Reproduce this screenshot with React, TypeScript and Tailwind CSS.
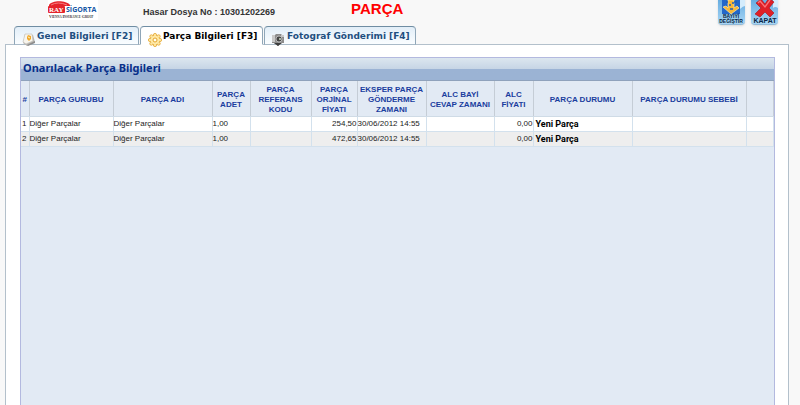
import type { ReactNode } from 'react';

type Column = { label: string[]; width: string };

const columns: Column[] = [
  { label: ['#'], width: 'w-[8px]' },
  { label: ['PARÇA GURUBU'], width: 'w-[84px]' },
  { label: ['PARÇA ADI'], width: 'w-[99px]' },
  { label: ['PARÇA', 'ADET'], width: 'w-[38px]' },
  { label: ['PARÇA', 'REFERANS', 'KODU'], width: 'w-[61px]' },
  { label: ['PARÇA', 'ORJİNAL', 'FİYATI'], width: 'w-[46px]' },
  { label: ['EKSPER PARÇA', 'GÖNDERME', 'ZAMANI'], width: 'w-[69px]' },
  { label: ['ALC BAYİ', 'CEVAP ZAMANI'], width: 'w-[68px]' },
  { label: ['ALC', 'FİYATI'], width: 'w-[39px]' },
  { label: ['PARÇA DURUMU'], width: 'w-[99px]' },
  { label: ['PARÇA DURUMU SEBEBİ'], width: 'w-[114px]' },
  { label: [], width: '' },
];

const rows = [
  ['1', 'Diğer Parçalar', 'Diğer Parçalar', '1,00', '', '254,50', '30/06/2012 14:55', '', '0,00', 'Yeni Parça', '', ''],
  ['2', 'Diğer Parçalar', 'Diğer Parçalar', '1,00', '', '472,65', '30/06/2012 14:55', '', '0,00', 'Yeni Parça', '', ''],
];

function cellStyle(index: number) {
  if (index === 0) return 'pl-px text-[#222]';
  if (index === 5 || index === 8) return 'text-right text-[#222]';
  if (index === 9) return "pl-[2px] font-['Roboto',sans-serif] text-[9px] font-bold text-black";
  return 'text-[#222]';
}

function Logo() {
  return (
    <svg role="img" aria-label="Ray Sigorta" width="50" height="20" viewBox="0 0 50 20" className="bg-white">
      <path d="M1 5C4 0 18 0 22 5V6H1Z" fill="#e5242b" />
      <rect x="0" y="6" width="17" height="7" rx="1" fill="#e5242b" />
      <path d="M3 5Q10 1 19 5" fill="none" stroke="#f47d7d" />
      <text x="1" y="12" fill="#fff" className="font-['Liberation_Serif',serif] text-[7px] font-bold">RAY</text>
      <text x="18" y="12" fill="#1456a5" className="font-['Open_Sans',sans-serif] text-[7px] font-bold">SİGORTA</text>
      <text x="1" y="18" fill="#333" className="font-['Liberation_Serif',serif] text-[4px] font-bold [font-variant:small-caps]">Vienna Insurance Group</text>
    </svg>
  );
}

function CardIcon() {
  return (
    <svg aria-hidden="true" width="14" height="14" viewBox="0 0 14 14">
      <path d="m3 1 8 1 2 7-8 4-4-3Z" fill="#b8b6b2" />
      <path d="m3 1 7 0 1 7-7 3-3-2Z" fill="#f8f5ed" stroke="#bdbab4" strokeWidth=".6" />
      <path d="m6 2 3 1v3L7 8 5 6V4Z" fill="#f1a92b" />
      <path d="m6 4 2 1" stroke="#fff2ba" />
      <path d="m5 12 8-4v2l-7 3Z" fill="#8d8d8d" />
    </svg>
  );
}

function GearIcon() {
  return (
    <svg aria-hidden="true" width="14" height="14" viewBox="0 0 14 14">
      <g fill="#ffe9a6" stroke="#e3a52b" strokeWidth=".8">
        <circle cx="7" cy="2" r="1.6" /><circle cx="7" cy="12" r="1.6" />
        <circle cx="2" cy="7" r="1.6" /><circle cx="12" cy="7" r="1.6" />
        <circle cx="3.4" cy="3.4" r="1.6" /><circle cx="10.6" cy="3.4" r="1.6" />
        <circle cx="3.4" cy="10.6" r="1.6" /><circle cx="10.6" cy="10.6" r="1.6" />
      </g>
      <circle cx="7" cy="7" r="4.3" fill="#ffe9a6" />
      <circle cx="7" cy="7" r="2" fill="#fffdf2" stroke="#e3a52b" />
    </svg>
  );
}

function CameraIcon() {
  return (
    <svg aria-hidden="true" width="14" height="14" viewBox="0 0 14 14">
      <path d="M0 2h3l1-1h5l1 1h2v8H9l-3 3-4-3H0Z" fill="#8d8d8d" />
      <path d="M0 2h3v7H0ZM9 2h3v2H9Z" fill="#c9c9c9" />
      <circle cx="7" cy="6" r="3" fill="#444" stroke="#ddd" strokeWidth=".7" />
      <circle cx="8" cy="6" r="1" fill="#cbd8c5" />
      <path d="M2 10h8l-4 3Z" fill="#3d3d3d" />
    </svg>
  );
}

function Tab({ icon, label, width, active = false }: { icon: ReactNode; label: string; width: string; active?: boolean }) {
  const look = active
    ? 'border-b-white bg-white text-black'
    : 'border-b-[#a9bac8] bg-linear-to-b from-[#e2eef8] to-[#fafdff] text-[#1f4f80]';
  return (
    <button
      role="tab"
      aria-selected={active}
      className={`${width} ${look} flex h-[19px] shrink-0 items-start gap-px whitespace-nowrap rounded-t-[4px] border border-x-[#8fa6b8] border-t-[#6f8da3] pl-[7px] pt-px font-['DejaVu_Sans',sans-serif] text-[9px] font-bold leading-4`}
    >
      <span className="mt-[5px] h-[14px] shrink-0">{icon}</span>
      {label}
    </button>
  );
}

const toolButton =
  'h-[28px] w-[27px] overflow-hidden rounded-b-[4px] border-b border-[#8fb9d8] bg-linear-to-b from-[#5fa8de] to-[#a8d6f5] shadow-sm';

export default function App() {
  return (
    <div className="flex h-screen flex-col overflow-hidden bg-[#f8f8f8] font-['Liberation_Sans',Arial,sans-serif]">
      <header className="flex h-[26px] shrink-0 items-start justify-between pl-[48px] pr-[22px]">
        <div className="flex items-start">
          <Logo />
          <span className="ml-[45px] mt-[5px] whitespace-nowrap text-[9px] font-bold leading-[14px] text-[#333]">
            Hasar Dosya No : 10301202269
          </span>
          <h1 className="ml-[76px] text-[15px] font-bold leading-[18px] text-[#ff0000]">PARÇA</h1>
        </div>
        <div className="-mt-[3px] flex gap-[6px]">
          <button className={toolButton} aria-label="BAYİYİ DEĞİŞTİR">
            <svg width="27" height="28" viewBox="0 0 27 28" aria-hidden="true">
              <path d="M4 0h18v17H4Z" fill="#2367c9" />
              <path d="M22 0h5v9q-2 0-5 3Z" fill="#d4ecfc" />
              <path d="m5 10 3-1 2 2V3h6v8l3-2 2 2-8 6Z" fill="#f8b735" stroke="#ffe8a1" strokeWidth=".7" />
              <path d="M8 5h2M16 5h3M11 8h2M14 6h2M12 12h3" stroke="#235fb2" strokeWidth="1.3" />
              <text x="13" y="21" textAnchor="middle" fill="#091d3b" className="text-[5px] font-bold">BAYİYİ</text>
              <text x="13" y="26" textAnchor="middle" fill="#091d3b" className="text-[5px] font-bold">DEĞİŞTİR</text>
            </svg>
          </button>
          <button className={toolButton} aria-label="KAPAT">
            <svg width="27" height="28" viewBox="0 0 27 28" aria-hidden="true">
              <path d="M22 0h5v11q-3-2-5 0Z" fill="#d4ecfc" />
              <path d="m5 6 5-4 4 5 4-6 5 4-5 6 5 5-4 4-5-5-5 5-5-3 6-6Z" fill="#df2027" stroke="#a90f17" strokeWidth=".6" />
              <path d="m7 6 2-2 5 6 5-7" fill="none" stroke="#fb7478" strokeWidth="1.3" />
              <text x="14" y="26" textAnchor="middle" fill="#0c2745" className="text-[7px] font-bold">KAPAT</text>
            </svg>
          </button>
        </div>
      </header>

      <div role="tablist" className="relative z-10 -mb-px flex shrink-0 gap-px pl-[14px]">
        <Tab icon={<CardIcon />} label="Genel Bilgileri [F2]" width="w-[125px]" />
        <Tab icon={<GearIcon />} label="Parça Bilgileri [F3]" width="w-[123px]" active />
        <Tab icon={<CameraIcon />} label="Fotograf Gönderimi [F4]" width="w-[152px]" />
      </div>

      <main className="ml-[5px] mr-[11px] flex min-h-0 flex-1 flex-col border border-b-0 border-[#b3c0cb] bg-white pl-[14px] pr-[13px] pt-[12px]">
        <section className="flex min-h-0 flex-1 flex-col border border-b-0 border-[#b3b9df] bg-[#e2eaf4]">
          <h2 className="h-[23px] shrink-0 border-b border-[#8fa2bc] bg-linear-to-b from-[#dce6ef] from-0% via-[#c6d5e5] via-50% to-[#9bb3d4] to-50% pl-[2px] font-['Noto_Sans',sans-serif] text-[11px] font-bold leading-[20px] text-[#082f89]">
            Onarılacak Parça Bilgileri
          </h2>
          <table className="w-full table-fixed border-collapse text-[8px]">
            <thead>
              <tr className="h-[35px]">
                {columns.map((column, index) => (
                  <th
                    key={index}
                    scope="col"
                    className={`${column.width} whitespace-nowrap border-b border-r border-b-[#cfdbe6] border-r-[#c5cdd6] p-0 pt-[3px] text-center align-middle font-bold leading-[10px] text-[#1a3d9e]`}
                  >
                    {column.label.map((line) => (
                      <span key={line} className="block">{line}</span>
                    ))}
                  </th>
                ))}
              </tr>
            </thead>
            <tbody>
              {rows.map((row) => (
                <tr key={row[0]} className="h-[15px] bg-white even:bg-[#eeeeee]">
                  {row.map((value, index) => (
                    <td
                      key={index}
                      className={`${cellStyle(index)} whitespace-nowrap border-b border-r border-[#d3e1ed] p-0 leading-[14px]`}
                    >
                      {value}
                    </td>
                  ))}
                </tr>
              ))}
            </tbody>
          </table>
        </section>
      </main>
    </div>
  );
}
